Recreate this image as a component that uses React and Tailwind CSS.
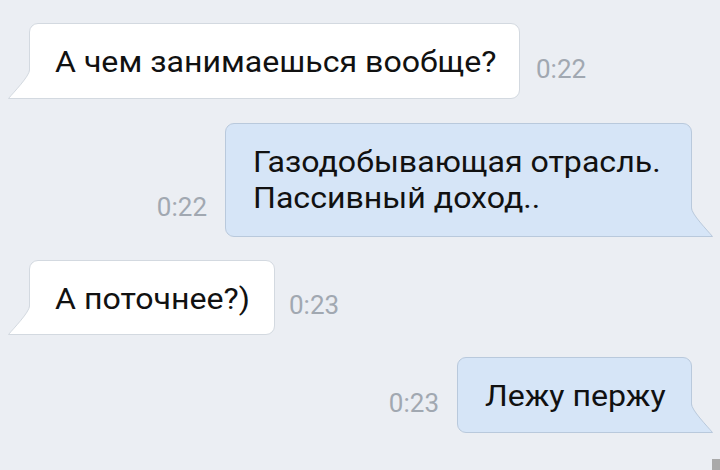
import React from "react";

function LeftTail({ fill, stroke }) {
  return (
    <svg
      className="absolute left-[-22px] bottom-[-1px]"
      width="23"
      height="29"
      viewBox="0 0 23 29"
    >
      <path d="M21.5 0 C21.5 6 6 22 0.5 28.5 L23 28.5 L23 0 Z" fill={fill} />
      <path d="M21.5 0 C21.5 6 6 22 0.5 28.5 L23 28.5" fill="none" stroke={stroke} strokeWidth="1" />
    </svg>
  );
}

function RightTail({ fill, stroke }) {
  return (
    <svg
      className="absolute right-[-22px] bottom-[-1px]"
      width="23"
      height="29"
      viewBox="0 0 23 29"
    >
      <path d="M1.5 0 C1.5 6 17 22 22.5 28.5 L0 28.5 L0 0 Z" fill={fill} />
      <path d="M1.5 0 C1.5 6 17 22 22.5 28.5 L0 28.5" fill="none" stroke={stroke} strokeWidth="1" />
    </svg>
  );
}

function Time({ children, className }) {
  return (
    <div className={"text-[26px] leading-[30px] mb-[15px] text-[#a1a8b1] " + className}>
      {children}
    </div>
  );
}

function Line({ children }) {
  return <div className="origin-left scale-x-[1.07]">{children}</div>;
}

export default function App() {
  return (
    <div className="relative w-[720px] h-[470px] overflow-hidden bg-[#ebeef3] font-['Roboto',sans-serif]">
      <div className="flex flex-col pt-[23px]">
        <div className="flex items-end pl-[29px]">
          <div className="relative box-border w-[491px] border border-[#d3d9e0] bg-white rounded-[9px] rounded-bl-none pl-[25px] pt-[20px] pb-[18px] text-[30px] leading-[36px] whitespace-nowrap text-[#111]">
            <Line>А чем занимаешься вообще?</Line>
            <LeftTail fill="#ffffff" stroke="#d3d9e0" />
          </div>
          <Time className="ml-[16px]">0:22</Time>
        </div>

        <div className="flex items-end justify-end pr-[28px] mt-[24px]">
          <Time className="mr-[18px]">0:22</Time>
          <div className="relative box-border w-[467px] border border-[#b9c9dc] bg-[#d6e5f7] rounded-[9px] rounded-br-none pl-[27px] pt-[20px] pb-[20px] text-[30px] leading-[36px] whitespace-nowrap text-[#111]">
            <Line>Газодобывающая отрасль.</Line>
            <Line>Пассивный доход..</Line>
            <RightTail fill="#d6e5f7" stroke="#b9c9dc" />
          </div>
        </div>

        <div className="flex items-end pl-[29px] mt-[23px]">
          <div className="relative box-border w-[246px] border border-[#d3d9e0] bg-white rounded-[9px] rounded-bl-none pl-[25px] pt-[20px] pb-[17px] text-[30px] leading-[36px] whitespace-nowrap text-[#111]">
            <Line>А поточнее?)</Line>
            <LeftTail fill="#ffffff" stroke="#d3d9e0" />
          </div>
          <Time className="ml-[14px]">0:23</Time>
        </div>

        <div className="flex items-end justify-end pr-[28px] mt-[22px]">
          <Time className="mr-[18px]">0:23</Time>
          <div className="relative box-border w-[235px] border border-[#b9c9dc] bg-[#d6e5f7] rounded-[9px] rounded-br-none pl-[27px] pt-[20px] pb-[18px] text-[30px] leading-[36px] whitespace-nowrap text-[#111]">
            <Line>Лежу пержу</Line>
            <RightTail fill="#d6e5f7" stroke="#b9c9dc" />
          </div>
        </div>
      </div>
      <div className="absolute right-0 bottom-0 w-[8px] h-[11px] bg-[#a9a9a9]" />
    </div>
  );
}
